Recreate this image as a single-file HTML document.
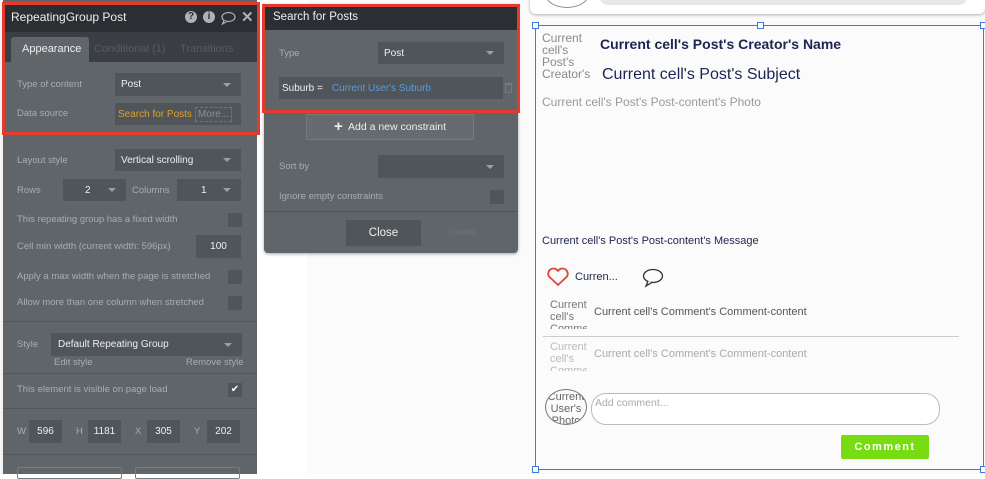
<!DOCTYPE html>
<html><head><meta charset="utf-8"><style>
*{margin:0;padding:0;box-sizing:border-box}
body{width:985px;height:474px;overflow:hidden;position:relative;background:#fff;font-family:"Liberation Sans",sans-serif;font-size:10px}
.a{position:absolute;white-space:nowrap}
.lbl{color:#a9adb1;font-size:9.5px}
.inp{position:absolute;background:#505559;color:#eef0f2;font-size:10px;display:flex;align-items:center}
.dd::after{content:"";position:absolute;right:10px;top:50%;margin-top:-2px;border-left:4px solid transparent;border-right:4px solid transparent;border-top:4px solid #9ca0a4}
.cb{position:absolute;width:14px;height:14px;background:#505559}
.div{position:absolute;height:1px;background:#52575b}
.red{position:absolute;border:3px solid #e53b2f}
.gr{color:#8a8a8a;font-size:12px;line-height:12px}
.nv{color:#1d2451}
.h{position:absolute;width:7px;height:7px;border:1.5px solid #3a7bd5;background:#fff}
</style></head><body>
<!-- right canvas bg -->
<div class="a" style="left:307px;top:0;width:678px;height:474px;background:#fbfbfb"></div>
<!-- top card -->
<div class="a" style="left:530px;top:-10px;width:455px;height:24px;background:#fff;border-radius:6px;box-shadow:0 1px 3px rgba(0,0,0,.3)"></div>
<div class="a" style="left:545px;top:-20px;width:44px;height:28px;border:1px solid #888;border-radius:50%"></div>
<div class="a" style="left:600px;top:-10px;width:367px;height:15px;background:#e8e8e8;border-radius:8px"></div>
<!-- RG -->
<div class="a" style="left:535px;top:25px;width:449px;height:445px;border:1px solid #3a7bd5"></div>
<div class="h" style="left:532px;top:22px"></div><div class="h" style="left:757px;top:22px"></div><div class="h" style="left:980px;top:22px"></div>
<div class="h" style="left:532px;top:466px"></div><div class="h" style="left:980px;top:466px"></div>
<div class="a gr" style="left:542px;top:32px;white-space:normal;width:50px">Current<br>cell's<br>Post's<br>Creator's</div>
<div class="a nv" style="left:600px;top:36px;font-size:14px;font-weight:bold">Current cell's Post's Creator's Name</div>
<div class="a nv" style="left:602px;top:66px;font-size:16px">Current cell's Post's Subject</div>
<div class="a" style="left:542px;top:95px;font-size:12px;color:#999">Current cell's Post's Post-content's Photo</div>
<div class="a nv" style="left:542px;top:235px;font-size:11px">Current cell's Post's Post-content's Message</div>
<svg class="a" style="left:546px;top:267px" width="24" height="20" viewBox="0 0 24 20"><path d="M12 18 L3 9.5 A5 5 0 0 1 12 4 A5 5 0 0 1 21 9.5 Z" fill="none" stroke="#e0443a" stroke-width="1.8" stroke-linejoin="round"/></svg>
<div class="a nv" style="left:575px;top:271px;font-size:11px">Curren...</div>
<svg class="a" style="left:642px;top:268px" width="22" height="20" viewBox="0 0 22 20"><ellipse cx="11" cy="8" rx="9.5" ry="6.5" fill="none" stroke="#333" stroke-width="1.3"/><path d="M6 13 L4 18 L10 14.3" fill="#fbfbfb" stroke="#333" stroke-width="1.3"/></svg>
<div class="a" style="left:550px;top:299px;width:37px;height:30px;overflow:hidden;font-size:11px;line-height:12px;color:#777;white-space:normal">Current cell's Comment</div>
<div class="a" style="left:594px;top:306px;font-size:11px;color:#555">Current cell's Comment's Comment-content</div>
<div class="a" style="left:543px;top:336px;width:416px;height:1px;background:#ccc"></div>
<div class="a" style="left:550px;top:341px;width:37px;height:30px;overflow:hidden;font-size:11px;line-height:12px;color:#bbb;white-space:normal">Current cell's Comment</div>
<div class="a" style="left:594px;top:348px;font-size:11px;color:#aaa">Current cell's Comment's Comment-content</div>
<div class="a" style="left:545px;top:389px;width:42px;height:36px;border:1px solid #777;border-radius:50%;overflow:hidden;font-size:11px;line-height:12px;color:#666;text-align:center;white-space:normal;padding-top:1px">Current User's Photo</div>
<div class="a" style="left:591px;top:393px;width:349px;height:32px;border:1px solid #bbb;border-radius:15px;background:#fff"></div>
<div class="a" style="left:595px;top:397px;font-size:10.5px;color:#aaa">Add comment...</div>
<div class="a" style="left:841px;top:435px;width:88px;height:24px;background:#77dd12;border-radius:2px;color:#fff;font-weight:bold;font-size:11px;letter-spacing:1.5px;text-align:center;line-height:24px">Comment</div>

<!-- left panel -->
<div class="a" style="left:0;top:0;width:3px;height:474px;background:#f4f4f4"></div>
<div class="a" style="left:3px;top:0;width:254px;height:474px;background:#60656a"></div>
<div class="a" style="left:3px;top:2px;width:254px;height:30px;background:#2b2f33"></div>
<div class="a" style="left:11px;top:10px;color:#eee;font-size:12px">RepeatingGroup Post</div>
<div class="a" style="left:185px;top:11px;width:12px;height:12px;border-radius:50%;background:#aeb2b6;color:#2b2f33;font-weight:bold;font-size:10px;text-align:center;line-height:12px">?</div>
<div class="a" style="left:203px;top:11px;width:12px;height:12px;border-radius:50%;background:#aeb2b6;color:#2b2f33;font-weight:bold;font-size:10px;text-align:center;line-height:12px">i</div>
<svg class="a" style="left:220px;top:11px" width="16" height="14" viewBox="0 0 16 14"><ellipse cx="8.5" cy="6" rx="6.5" ry="4.5" fill="none" stroke="#aeb2b6" stroke-width="1.2"/><path d="M4 9.5 L2.5 13 L7 10.4" fill="#2b2f33" stroke="#aeb2b6" stroke-width="1.2"/></svg>
<div class="a" style="left:241px;top:8px;color:#aeb2b6;font-size:15px;font-weight:bold">✕</div>
<div class="a" style="left:3px;top:32px;width:254px;height:30px;background:#3b3f43"></div>
<div class="a" style="left:11px;top:37px;width:78px;height:25px;background:#60656a;border-radius:3px 3px 0 0"></div>
<div class="a" style="left:22px;top:43px;color:#eee;font-size:11px">Appearance</div>
<div class="a" style="left:94px;top:43px;color:#565b5f;font-size:11px">Conditional (1)</div>
<div class="a" style="left:180px;top:43px;color:#565b5f;font-size:11px">Transitions</div>
<div class="a lbl" style="left:17px;top:79px">Type of content</div>
<div class="inp dd" style="left:115px;top:73px;width:126px;height:23px;padding-left:6px">Post</div>
<div class="a lbl" style="left:17px;top:108px">Data source</div>
<div class="inp" style="left:115px;top:103px;width:126px;height:22px;padding-left:3px"><span style="color:#e2a027">Search for Posts</span><span style="margin-left:3px;color:#8b8f93;border:1px dashed #70757a;padding:1px 2px">More...</span></div>
<div class="red" style="left:2px;top:2px;width:258px;height:133px"></div>
<div class="a lbl" style="left:17px;top:155px">Layout style</div>
<div class="inp dd" style="left:115px;top:149px;width:126px;height:22px;padding-left:6px">Vertical scrolling</div>
<div class="a lbl" style="left:17px;top:185px">Rows</div>
<div class="inp dd" style="left:63px;top:179px;width:63px;height:22px;padding-left:22px">2</div>
<div class="a lbl" style="left:132px;top:185px">Columns</div>
<div class="inp dd" style="left:177px;top:179px;width:64px;height:22px;padding-left:24px">1</div>
<div class="a lbl" style="left:17px;top:214px">This repeating group has a fixed width</div>
<div class="cb" style="left:228px;top:213px"></div>
<div class="a lbl" style="left:17px;top:241px">Cell min width (current width: 596px)</div>
<div class="inp" style="left:196px;top:235px;width:45px;height:23px;justify-content:center">100</div>
<div class="a lbl" style="left:17px;top:271px">Apply a max width when the page is stretched</div>
<div class="cb" style="left:228px;top:270px"></div>
<div class="a lbl" style="left:17px;top:297px">Allow more than one column when stretched</div>
<div class="cb" style="left:228px;top:296px"></div>
<div class="div" style="left:3px;top:321px;width:254px"></div>
<div class="a lbl" style="left:17px;top:339px">Style</div>
<div class="inp dd" style="left:51px;top:333px;width:191px;height:23px;padding-left:7px">Default Repeating Group</div>
<div class="a lbl" style="left:54px;top:357px">Edit style</div>
<div class="a lbl" style="left:186px;top:357px">Remove style</div>
<div class="div" style="left:3px;top:373px;width:254px"></div>
<div class="a lbl" style="left:17px;top:384px">This element is visible on page load</div>
<div class="cb" style="left:228px;top:383px;color:#fff;font-size:10px;text-align:center;line-height:14px">✔</div>
<div class="div" style="left:3px;top:408px;width:254px"></div>
<div class="a lbl" style="left:17px;top:426px">W</div><div class="inp" style="left:29px;top:420px;width:33px;height:23px;justify-content:center">596</div>
<div class="a lbl" style="left:76px;top:426px">H</div><div class="inp" style="left:88px;top:420px;width:33px;height:23px;justify-content:center">1181</div>
<div class="a lbl" style="left:135px;top:426px">X</div><div class="inp" style="left:147px;top:420px;width:33px;height:23px;justify-content:center">305</div>
<div class="a lbl" style="left:194px;top:426px">Y</div><div class="inp" style="left:207px;top:420px;width:33px;height:23px;justify-content:center">202</div>
<div class="div" style="left:3px;top:454px;width:254px"></div>
<div class="a" style="left:17px;top:467px;width:105px;height:12px;border:1px solid #777c80;border-radius:2px"></div>
<div class="a" style="left:135px;top:467px;width:105px;height:12px;border:1px solid #777c80;border-radius:2px"></div>

<!-- middle panel -->
<div class="a" style="left:264px;top:4px;width:254px;height:249px;background:#60656a;border-radius:0 0 4px 4px;box-shadow:0 1px 3px rgba(0,0,0,.35)"></div>
<div class="a" style="left:264px;top:7px;width:254px;height:23px;background:#2b2f33"></div>
<div class="a" style="left:273px;top:11px;color:#eee;font-size:11.5px">Search for Posts</div>
<div class="a lbl" style="left:279px;top:48px">Type</div>
<div class="inp dd" style="left:378px;top:42px;width:126px;height:22px;padding-left:6px">Post</div>
<div class="inp" style="left:279px;top:77px;width:224px;height:22px;padding-left:3px">Suburb =<span style="margin-left:9px;color:#5b9bd5">Current User's Suburb</span></div>
<svg class="a" style="left:504px;top:82px" width="9" height="11" viewBox="0 0 9 11"><rect x="0.5" y="1" width="8" height="1.2" fill="#777c80"/><rect x="1.5" y="2.8" width="6" height="7.5" fill="none" stroke="#777c80" stroke-width="1"/></svg>
<div class="red" style="left:262px;top:4px;width:258px;height:109px"></div>
<div class="a" style="left:306px;top:114px;width:168px;height:26px;background:#666b70;border:1px solid #75797d;color:#eee;font-size:10.5px;text-align:center;line-height:24px"><b style="font-size:15px;vertical-align:-1px">+</b>&nbsp; Add a new constraint</div>
<div class="a lbl" style="left:279px;top:161px">Sort by</div>
<div class="inp dd" style="left:378px;top:155px;width:126px;height:23px"></div>
<div class="a lbl" style="left:279px;top:191px">Ignore empty constraints</div>
<div class="cb" style="left:490px;top:190px"></div>
<div class="div" style="left:264px;top:211px;width:254px;background:#4f5458"></div>
<div class="a" style="left:346px;top:220px;width:75px;height:26px;background:#505559;color:#eee;font-size:11.5px;text-align:center;line-height:26px">Close</div>
<div class="a" style="left:449px;top:227px;color:#6e7377;font-size:9.5px">Delete</div>
</body></html>
